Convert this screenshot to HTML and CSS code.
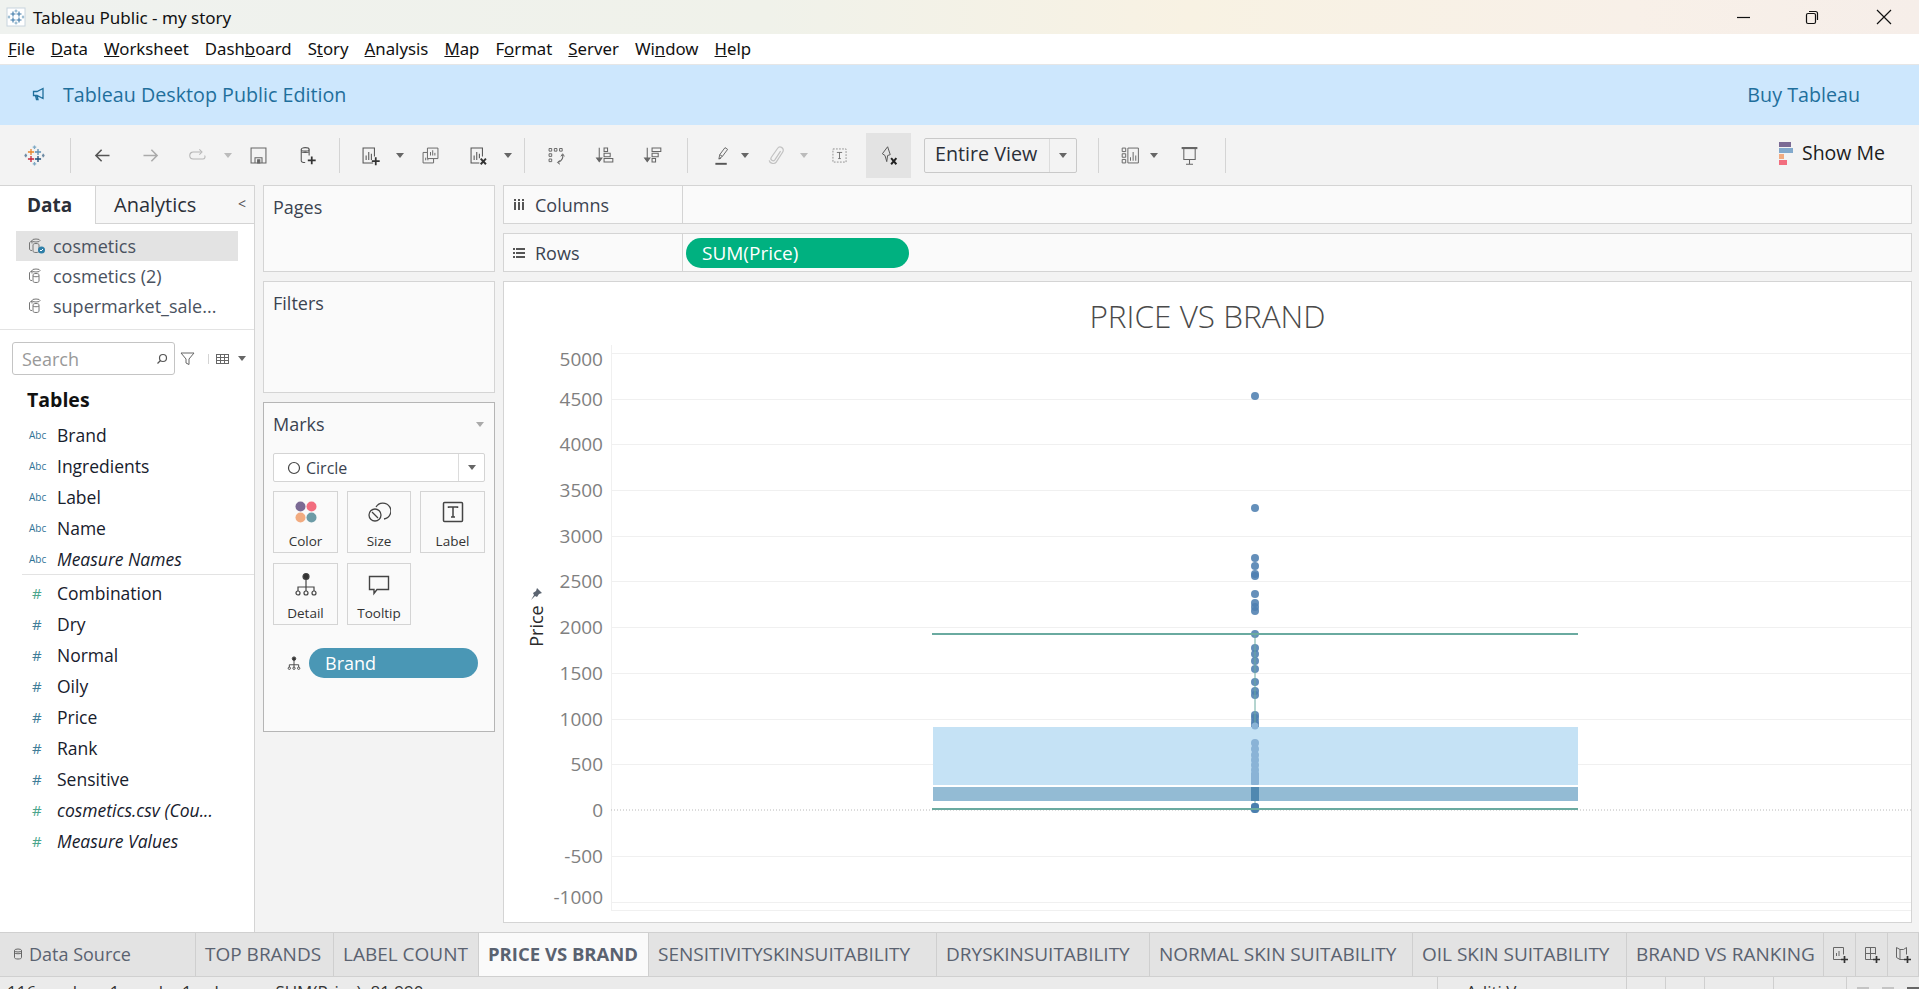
FILE: index.html
```html
<!DOCTYPE html>
<html lang="en">
  <head>
    <meta charset="utf-8">
    <title>Tableau Public - my story</title>
    <link rel="stylesheet" href="styles.css">
  </head>
  <body>
    <div class="titlebar">
      <svg class="app-icon" width="20" height="20" viewBox="0 0 20 20"><rect x="1" y="1" width="18" height="18" fill="#fff" stroke="#c8d4de"/><path d="M7 4.500v5M4.500 7h5M13 4.500v5M10.500 7h5M7 10.500v5M4.500 13h5M13 10.500v5M10.500 13h5" stroke="#3c78a8" stroke-width="1.100" fill="none"/><path d="M10 2.500v3M8.500 4h3M10 14.500v3M8.500 16h3M3 8.500v3M1.800 10h2.400M17 8.500v3M15.800 10h2.400" stroke="#7fa9c4" fill="none"/></svg>
      <span class="app-title">Tableau Public - my story</span>
      <div class="win-btns">
        <svg width="16" height="16" viewBox="0 0 16 16"><path d="M1 8.500h13" stroke="#111" stroke-width="1.200"/></svg>
        <svg width="16" height="16" viewBox="0 0 16 16"><rect x="2.500" y="4.500" width="9" height="10" rx="1.500" fill="none" stroke="#111" stroke-width="1.200"/><path d="M5 2.500h6.500a2 2 0 0 1 2 2V11" fill="none" stroke="#111" stroke-width="1.200"/></svg>
        <svg class="win-close" width="16" height="16" viewBox="0 0 16 16"><path d="M1 1l14 14M15 1L1 15" stroke="#111" stroke-width="1.200"/></svg>
      </div>
    </div>
    <div class="menubar">
      <span><u>F</u>ile</span><span><u>D</u>ata</span><span><u>W</u>orksheet</span><span>Dash<u>b</u>oard</span><span>S<u>t</u>ory</span><span><u>A</u>nalysis</span><span><u>M</u>ap</span><span>F<u>o</u>rmat</span><span><u>S</u>erver</span><span>Wi<u>n</u>dow</span><span><u>H</u>elp</span>
    </div>
    <div class="banner">
      <svg width="14" height="14" viewBox="0 0 14 14"><path d="M1.500 4.500h3.500l6-3v10l-6-3H1.500zM3.500 8.500l1 4h1.500l-1-4" fill="none" stroke="#1f6f9c" stroke-width="1.300"/></svg>
      <span class="banner-title">Tableau Desktop Public Edition</span>
      <span class="banner-buy">Buy Tableau</span>
    </div>

    <div class="toolbar">
      <div class="tool">
        <svg width="24" height="24" viewBox="0 0 24 24" fill="none" stroke-width="1.500"><path d="M8 4.500v7M4.500 8h7" stroke="#e8862c"/><path d="M16 4.500v7M12.500 8h7" stroke="#5d8fb3"/><path d="M8 12.500v7M4.500 16h7" stroke="#c5283d"/><path d="M16 12.500v7M12.500 16h7" stroke="#1f4e79"/><path d="M12 .5v4M10 2.500h4M12 19.500v4M10 21.500h4" stroke="#7fa9c4"/><path d="M2 10v4M.5 12h3M22 10v4M20.500 12h3" stroke="#6d8aa3"/></svg>
      </div>

      <div class="group group-history">
        <div class="tool"><svg width="24" height="24" viewBox="0 0 24 24" fill="none" stroke="#555" stroke-width="1.800"><path d="M20 12H5M11 5.500L4.500 12l6.500 6.500"/></svg></div>
        <div class="tool"><svg width="24" height="24" viewBox="0 0 24 24" fill="none" stroke="#aaa" stroke-width="1.800"><path d="M4 12h15M13 5.500l6.500 6.500-6.500 6.500"/></svg></div>
        <div class="tool"><svg width="24" height="24" viewBox="0 0 24 24" fill="none" stroke="#b5b5b5" stroke-width="1.200"><path d="M15 8H6a2.500 2.500 0 0 0 0 8h11a2.500 2.500 0 0 0 2-4"/><path d="M13 5l3 3-3 3"/></svg></div>
        <div class="caret caret-off"></div>
        <div class="tool"><svg width="24" height="24" viewBox="0 0 24 24" fill="none" stroke="#666" stroke-width="1.200"><path d="M3.500 3.500h17v17h-17z"/><path d="M8 20.500v-6h8v6"/><path d="M11 17h2.500v3.500H11z" fill="#666"/></svg></div>
        <div class="tool"><svg width="24" height="24" viewBox="0 0 24 24" fill="none" stroke="#555" stroke-width="1.200"><ellipse cx="10.500" cy="5" rx="4.500" ry="2"/><path d="M6 5v13c0 1 2 2 4.500 2M15 5v7M6 7.500c1 1.500 8 1.500 9 0"/><path d="M18 13v9M13.500 17.500h9" stroke="#333" stroke-width="2"/></svg></div>
      </div>

      <div class="group group-sheet">
        <div class="tool"><svg width="24" height="24" viewBox="0 0 24 24" fill="none" stroke="#555" stroke-width="1.200"><path d="M15 20.500H3.500v-17h13V13"/><path d="M7 17v-5M10 17V8M13 17v-7"/><path d="M18 14v9M13.500 18.500h9" stroke="#333" stroke-width="2"/></svg></div>
        <div class="caret"></div>
        <div class="tool"><svg width="24" height="24" viewBox="0 0 24 24" fill="none" stroke="#666" stroke-width="1.100"><path d="M8.500 3.500h12v12h-12z"/><path d="M12 12V8M14.500 12V6M17 12V9"/><path d="M8 8.500H3.500v12h12V16"/><path d="M6.500 17.500v-3M9 17.500v-2"/></svg></div>
        <div class="tool"><svg width="24" height="24" viewBox="0 0 24 24" fill="none" stroke="#555" stroke-width="1.200"><path d="M13 20.500H3.500v-17h13V13"/><path d="M7 17v-5M10 17V8M13 15v-5"/><path d="M14.500 15.500l6 6.500M20.500 15.500l-6 6.500" stroke="#333" stroke-width="2.200"/></svg></div>
        <div class="caret"></div>
      </div>

      <div class="group group-sort">
        <div class="tool"><svg width="24" height="24" viewBox="0 0 24 24" fill="none" stroke="#666" stroke-width="1.100"><path d="M3.500 4h3v3h-3zM9.500 4h3v3h-3zM15.500 4h3v3h-3zM3.500 10h3v3h-3zM3.500 16h3v3h-3z"/><path d="M19 11c1 4-1 7-5 9" stroke-width="1.300"/><path d="M16 22l-3-2 2.500-2.500M17 13l2-3 2 3"/></svg></div>
        <div class="tool"><svg width="24" height="24" viewBox="0 0 24 24" fill="none" stroke="#666" stroke-width="1.200"><path d="M6 3v15"/><path d="M3 15h6l-3 4z" fill="#666"/><path d="M11.500 3.500h4v4h-4zM11.500 9.500h7v4h-7zM11.500 15.500h10v4h-10z"/></svg></div>
        <div class="tool"><svg width="24" height="24" viewBox="0 0 24 24" fill="none" stroke="#666" stroke-width="1.200"><path d="M6 3v15"/><path d="M3 15h6l-3 4z" fill="#666"/><path d="M11.500 3.500h10v4h-10zM11.500 9.500h7v4h-7zM11.500 15.500h4v4h-4z"/></svg></div>
      </div>

      <div class="group group-mark">
        <div class="tool"><svg width="24" height="24" viewBox="0 0 24 24" fill="none" stroke="#666" stroke-width="1.100"><path d="M9 16l1-5 6-8 3 2-6 8zM10 11l3 2M9 16l2.500-1"/><path d="M5 21.500h13" stroke="#555" stroke-width="2.200"/></svg></div>
        <div class="caret caret-near"></div>
        <div class="tool tool-clip"><svg width="24" height="24" viewBox="0 0 24 24" fill="none" stroke="#c2c2c2" stroke-width="1.400"><path d="M15.500 7L9 17a2.500 2.500 0 0 1-4-3l7-10a3.500 3.500 0 0 1 6 4l-7.500 11.500c-2 3-7.500 1.500-8-2"/></svg></div>
        <div class="caret caret-off"></div>
        <div class="tool tool-text"><svg width="24" height="24" viewBox="0 0 24 24" fill="none" stroke="#888" stroke-width="1"><path d="M4.500 4.500h15v15h-15z" stroke-dasharray="2 1.500"/><path d="M9 8.500h6M12 8.500v7M10.500 15.500h3" stroke="#666"/></svg></div>
        <div class="tool tool-on"><svg width="24" height="24" viewBox="0 0 24 24" fill="none" stroke="#555" stroke-width="1.100"><path d="M11 2l3 9-3 1-1 7-2-7-3-2z"/><path d="M15 15l6 7M21 15l-6 7" stroke="#222" stroke-width="2.200"/></svg></div>
        <div class="fit-select"><span class="fit-label">Entire View</span><span class="fit-arrow"><i class="caret-shape"></i></span></div>
      </div>

      <div class="group group-fit">
        <div class="tool"><svg width="24" height="24" viewBox="0 0 24 24" fill="none" stroke="#666" stroke-width="1.100"><path d="M2.500 3.500h4v4h-4zM2.500 10h4v4h-4zM2.500 16.500h4v4h-4zM9 3.500h12v17H9z"/><path d="M12 18v-4M15 18V8M18 18v-6"/></svg></div>
        <div class="caret caret-near"></div>
        <div class="tool tool-present"><svg width="24" height="24" viewBox="0 0 24 24" fill="none" stroke="#666" stroke-width="1.200"><path d="M3 3.500h18" stroke-width="2.400"/><path d="M5.500 4v12.500h13V4M12 16.500V22M8 22h8"/></svg></div>
      </div>
      <div class="group-end"></div>

      <div class="show-me">
        <svg width="14" height="28" viewBox="0 0 14 28"><rect x="0" width="12" height="5" y="3" fill="#7b6a94"/><rect x="0" width="14" height="5" y="9" fill="#82a9cc"/><rect x="0" width="5" height="5" y="15" fill="#f2ab80"/><rect x="0" width="8" height="5" y="21" fill="#f26d7e"/></svg>
        <span>Show Me</span>
      </div>
    </div>

    <div class="main">
      <aside class="sidebar">
        <div class="side-tabs">
          <div class="side-tab side-tab-on">Data</div>
          <div class="side-tab">Analytics<span class="collapse">&lt;</span></div>
        </div>
        <div class="sources">
          <div class="source source-on">
            <svg width="18" height="18" viewBox="0 0 18 18" fill="none" stroke="#777"><ellipse cx="8" cy="3.500" rx="4" ry="1.500"/><path d="M4 3.500v3M1.500 6c0-1 1-1.500 2.500-1.500M1.500 6v6c0 1 1 1.500 2.500 1.500M5 8c0-1 1-1.500 3-1.500s3 .5 3 1.500v6c0 1-1 1.500-3 1.500S5 15 5 14z"/><circle cx="13.500" cy="13" r="3.500" fill="#2f7fa8" stroke="none"/><path d="M12 13l1 1 2-2" stroke="#fff"/></svg>
            <span>cosmetics</span>
          </div>
          <div class="source">
            <svg width="18" height="18" viewBox="0 0 18 18" fill="none" stroke="#777"><ellipse cx="8" cy="3.500" rx="4" ry="1.500"/><path d="M4 3.500v3M1.500 6c0-1 1-1.500 2.500-1.500M1.500 6v6c0 1 1 1.500 2.500 1.500M5 8c0-1 1-1.500 3-1.500s3 .5 3 1.500v6c0 1-1 1.500-3 1.500S5 15 5 14zM5 9c1 1 5 1 6 0"/></svg>
            <span>cosmetics (2)</span>
          </div>
          <div class="source">
            <svg width="18" height="18" viewBox="0 0 18 18" fill="none" stroke="#777"><ellipse cx="8" cy="3.500" rx="4" ry="1.500"/><path d="M4 3.500v3M1.500 6c0-1 1-1.500 2.500-1.500M1.500 6v6c0 1 1 1.500 2.500 1.500M5 8c0-1 1-1.500 3-1.500s3 .5 3 1.500v6c0 1-1 1.500-3 1.500S5 15 5 14zM5 9c1 1 5 1 6 0"/></svg>
            <span>supermarket_sale...</span>
          </div>
        </div>
        <div class="search-row">
          <div class="search">
            <span>Search</span>
            <svg width="12" height="12" viewBox="0 0 12 12" fill="none" stroke="#555" stroke-width="1.200"><circle cx="7" cy="5" r="3.500"/><path d="M4.500 7.500L1.500 10.500"/></svg>
          </div>
          <svg class="search-filter" width="15" height="15" viewBox="0 0 15 15" fill="none" stroke="#666"><path d="M1 2h13L9 8v5.500L6 12V8z"/></svg>
          <svg class="search-view" width="13" height="10" viewBox="0 0 13 10" fill="#666"><path d="M0 0h13v1H0zM0 3h13v1H0zM0 6h13v1H0zM0 9h13v1H0zM0 0h1v10H0zM4 0h1v10H4zM8 0h1v10H8zM12 0h1v10h-1z"/></svg>
          <i class="caret-shape"></i>
        </div>
        <h2 class="tables-head">Tables</h2>
        <ul class="fields">
          <li><i class="abc">Abc</i>Brand</li>
          <li><i class="abc">Abc</i>Ingredients</li>
          <li><i class="abc">Abc</i>Label</li>
          <li><i class="abc">Abc</i>Name</li>
          <li><i class="abc">Abc</i><em>Measure Names</em></li>
        </ul>
        <ul class="fields fields-num">
          <li><i class="num num-green">#</i>Combination</li>
          <li><i class="num">#</i>Dry</li>
          <li><i class="num">#</i>Normal</li>
          <li><i class="num">#</i>Oily</li>
          <li><i class="num">#</i>Price</li>
          <li><i class="num">#</i>Rank</li>
          <li><i class="num">#</i>Sensitive</li>
          <li><i class="num num-green">#</i><em>cosmetics.csv (Cou...</em></li>
          <li><i class="num num-green">#</i><em>Measure Values</em></li>
        </ul>
      </aside>

      <section class="cards">
        <div class="card card-pages">Pages</div>
        <div class="card card-filters">Filters</div>
        <div class="card card-marks">
          <div class="marks-head"><span>Marks</span><i class="caret-shape caret-light"></i></div>
          <div class="mark-type">
            <span class="mark-type-name"><svg width="14" height="14" viewBox="0 0 14 14" fill="none" stroke="#444" stroke-width="1.200"><circle cx="7" cy="7" r="5.500"/></svg>Circle</span>
            <span class="mark-type-arrow"><i class="caret-shape"></i></span>
          </div>
          <div class="mark-grid">
            <div class="mark-btn">
              <svg width="24" height="24" viewBox="0 0 24 24"><circle cx="6.500" cy="6.500" r="5" fill="#7b6a94"/><circle cx="17.500" cy="6.500" r="5" fill="#f26d7e"/><circle cx="6.500" cy="17.500" r="5" fill="#f2ab80"/><circle cx="17.500" cy="17.500" r="5" fill="#6c9ba6"/></svg>
              <span>Color</span>
            </div>
            <div class="mark-btn">
              <svg width="24" height="24" viewBox="0 0 24 24" fill="none" stroke="#444" stroke-width="1.300"><path d="M9 7a8 8 0 1 1 8 12"/><circle cx="8" cy="15" r="6"/><path d="M5 12l6 6"/></svg>
              <span>Size</span>
            </div>
            <div class="mark-btn">
              <svg width="24" height="24" viewBox="0 0 24 24" fill="none" stroke="#444" stroke-width="1.500"><rect x="2.500" y="2.500" width="19" height="19" rx="1"/><path d="M7.500 8V7h9v1M12 7v10M10 17h4"/></svg>
              <span>Label</span>
            </div>
            <div class="mark-btn">
              <svg width="24" height="24" viewBox="0 0 24 24" fill="none" stroke="#444" stroke-width="1.200"><circle cx="12" cy="4.500" r="3" fill="#333"/><path d="M12 7v8M4 19v-4h16v4M12 15v4"/><circle cx="4" cy="21" r="2"/><circle cx="12" cy="21" r="2"/><circle cx="20" cy="21" r="2"/></svg>
              <span>Detail</span>
            </div>
            <div class="mark-btn">
              <svg width="24" height="24" viewBox="0 0 24 24" fill="none" stroke="#444" stroke-width="1.400"><path d="M2.500 4.500h19v13H10l-3 4v-4H2.500z"/></svg>
              <span>Tooltip</span>
            </div>
          </div>
          <div class="mark-pill-row">
            <svg width="14" height="14" viewBox="0 0 24 24" fill="none" stroke="#444" stroke-width="1.600"><circle cx="12" cy="4.500" r="3" fill="#333"/><path d="M12 7v8M4 19v-4h16v4M12 15v4"/><circle cx="4" cy="21" r="2"/><circle cx="12" cy="21" r="2"/><circle cx="20" cy="21" r="2"/></svg>
            <div class="pill pill-blue">Brand</div>
          </div>
        </div>
      </section>

      <section class="work">
        <div class="shelf">
          <div class="shelf-label"><svg width="12" height="12" viewBox="0 0 12 12" fill="#555"><path d="M1 3h2v8H1zM5 3h2v8H5zM9 3h2v8H9zM1 0h2v2H1zM5 0h2v2H5zM9 0h2v2H9z"/></svg>Columns</div>
          <div class="shelf-body"></div>
        </div>
        <div class="shelf">
          <div class="shelf-label"><svg width="12" height="12" viewBox="0 0 12 12" fill="#555"><path d="M0 1h2v2H0zM0 5h2v2H0zM0 9h2v2H0zM3 1h9v2H3zM3 5h9v2H3zM3 9h9v2H3z"/></svg>Rows</div>
          <div class="shelf-body"><div class="pill pill-green">SUM(Price)</div></div>
        </div>
        <div class="canvas">
          <h1 class="viz-title">PRICE VS BRAND</h1>
          <svg class="viz" width="1407" height="600" viewBox="503 323 1407 600">
            <g class="grid">
              <path d="M610 346V911"/>
              <path d="M610 354H1910M610 400H1910M610 445H1910M610 491H1910M610 537H1910M610 582H1910M610 628H1910M610 674H1910M610 720H1910M610 765H1910M610 857H1910M610 903H1910M610 911H1910"/>
            </g>
            <path class="zero" d="M610 811H1910"/>
            <g class="ticks">
              <text x="602" y="367">5000</text>
              <text x="602" y="407">4500</text>
              <text x="602" y="452">4000</text>
              <text x="602" y="498">3500</text>
              <text x="602" y="544">3000</text>
              <text x="602" y="589">2500</text>
              <text x="602" y="635">2000</text>
              <text x="602" y="681">1500</text>
              <text x="602" y="727">1000</text>
              <text x="602" y="772">500</text>
              <text x="602" y="818">0</text>
              <text x="602" y="864">-500</text>
              <text x="602" y="905">-1000</text>
            </g>
            <g transform="translate(542 627) rotate(-90)">
              <text class="axis-title" text-anchor="middle">Price</text>
            </g>
            <path class="axis-pin" d="M536 589l5 5-3 1-2 3-2-1-4 4 3-5-1-2 3-2z"/>

            <g class="dots">
              <circle cx="1254" cy="397" r="4"/><circle cx="1254" cy="509" r="4"/><circle cx="1254" cy="559" r="4"/><circle cx="1254" cy="567" r="4"/><circle cx="1254" cy="575" r="4"/><circle cx="1254" cy="577" r="4"/><circle cx="1254" cy="595" r="4"/><circle cx="1254" cy="604" r="4"/><circle cx="1254" cy="608" r="4"/><circle cx="1254" cy="612" r="4"/>
              <circle cx="1254" cy="635" r="4"/><circle cx="1254" cy="649" r="4"/><circle cx="1254" cy="655" r="4"/><circle cx="1254" cy="662" r="4"/><circle cx="1254" cy="670" r="4"/><circle cx="1254" cy="683" r="4"/><circle cx="1254" cy="692" r="4"/><circle cx="1254" cy="696" r="4"/><circle cx="1254" cy="716" r="4"/><circle cx="1254" cy="719" r="4"/><circle cx="1254" cy="723" r="4"/><circle cx="1254" cy="726" r="4"/><circle cx="1254" cy="729" r="4"/>
            </g>
            <path class="whisker-stem" d="M1254 635V728M1254 802V810"/>
            <rect class="box-top" x="932" y="728" width="645" height="58"/>
            <rect class="box-bottom" x="932" y="788" width="645" height="14"/>
            <g class="dots dots-in-box">
              <circle cx="1254" cy="727" r="3.500"/>
              <circle cx="1254" cy="744" r="4"/><circle cx="1254" cy="750" r="4"/><circle cx="1254" cy="756" r="4"/><circle cx="1254" cy="761" r="4"/><circle cx="1254" cy="766" r="4"/><circle cx="1254" cy="771" r="4"/>
              <rect x="1250" y="773" width="8" height="13" rx="1"/>
            </g>
            <rect class="dots-solid" x="1250" y="788" width="8" height="14"/>
            <rect class="dots-dark" x="1250" y="804" width="8" height="10" rx="3"/>
            <path class="whisker" d="M931 635H1577M931 810H1577"/>
          </svg>
        </div>
      </section>
    </div>

    <div class="tabs">
      <div class="tab tab-source"><svg width="10" height="12" viewBox="0 0 10 12" fill="none" stroke="#666"><ellipse cx="5" cy="2.500" rx="3.500" ry="1.500"/><path d="M1.500 2.500v7c0 1 1.500 1.500 3.500 1.500s3.500-.5 3.500-1.500v-7M1.500 5c1 1 6 1 7 0"/></svg>Data Source</div>
      <div class="tab">TOP BRANDS</div>
      <div class="tab">LABEL COUNT</div>
      <div class="tab tab-on">PRICE VS BRAND</div>
      <div class="tab">SENSITIVITYSKINSUITABILITY</div>
      <div class="tab">DRYSKINSUITABILITY</div>
      <div class="tab">NORMAL SKIN SUITABILITY</div>
      <div class="tab">OIL SKIN SUITABILITY</div>
      <div class="tab">BRAND VS RANKING</div>
      <div class="tab tab-icon"><svg width="20" height="20" viewBox="0 0 20 20" fill="none" stroke="#666"><path d="M11 14.500H3.500v-12h10v7M6.500 11V8M9 11V6"/><path d="M14.500 11v7M11 14.500h7" stroke="#333" stroke-width="1.700"/></svg></div>
      <div class="tab tab-icon"><svg width="20" height="20" viewBox="0 0 20 20" fill="none" stroke="#666"><path d="M11 14.500H3.500v-12h10v7M3.500 8.500h10M8.500 2.500v12"/><path d="M14.500 11v7M11 14.500h7" stroke="#333" stroke-width="1.700"/></svg></div>
      <div class="tab tab-icon"><svg width="20" height="20" viewBox="0 0 20 20" fill="none" stroke="#666"><path d="M11 14.500H7l-3.500-2v-10l3.500 2h3.500l3-2v7M7 4.500v10"/><path d="M14.500 11v7M11 14.500h7" stroke="#333" stroke-width="1.700"/></svg></div>
    </div>
    <div class="statusbar">
      <div class="status-text"><span>116 marks</span><span>1 row by 1 column</span><span>SUM(Price): 81,990</span></div>
      <div class="status-cells">
        <div class="status-cell status-user">Aditi Verma</div>
        <div class="status-cell"></div>
        <div class="status-cell"></div>
        <div class="status-cell status-m"></div>
        <div class="status-cell status-l"></div>
        <div class="status-views"><i></i><i></i><i></i></div>
      </div>
    </div>
  </body>
</html>
```

FILE: styles.css
```css
html {
  height: 989px;
  margin: 0;
  padding: 0;
  overflow: hidden;
}
body {
  display: flex;
  flex-direction: column;
  height: 989px;
  margin: 0;
  overflow: hidden;
  background-color: #f3f3f3;
  font: 18px "Open Sans", sans-serif;
  color: #2b2f38;
}
ul {
  margin: 0;
  padding: 0;
  list-style: none;
}
i {
  font-style: normal;
}
em {
  font-style: italic;
}

/* window chrome */
.titlebar {
  display: flex;
  align-items: center;
  flex: none;
  height: 34px;
  padding-left: 6px;
  background: linear-gradient(90deg, #eff2ef 0%, #f0f2ea 40%, #f8f2e3 62%, #f8f0e8 85%, #f6eee9 100%);
}
.app-title {
  margin-left: 7px;
  font: 17px "Noto Sans", sans-serif;
  color: #111;
}
.win-btns {
  display: flex;
  gap: 52px;
  margin-left: auto;
  margin-right: 27px;
}
.win-close {
  margin-left: 4px;
}
.menubar {
  display: flex;
  align-items: center;
  flex: none;
  gap: 16px;
  height: 30px;
  box-sizing: content-box;
  padding-left: 8px;
  background-color: #fff;
  border-bottom: 1px solid #e6e6e6;
  font: 16.800px/34px "Noto Sans", sans-serif;
  color: #111;
}
.banner {
  display: flex;
  align-items: center;
  flex: none;
  height: 58px;
  padding: 0 59px 2px 32px;
  background-color: #cde7fd;
  color: #1f6f9c;
  font-size: 19.700px;
}
.banner-title {
  margin-left: 17px;
}
.banner-buy {
  margin-left: auto;
}

/* toolbar */
.toolbar {
  display: flex;
  align-items: center;
  flex: none;
  height: 60px;
  padding-left: 10px;
}
.tool {
  display: flex;
  align-items: center;
  justify-content: center;
  flex: none;
  width: 48px;
  height: 45px;
}
.tool svg {
  width: 21px;
  height: 21px;
}
.tool-on {
  width: 45px;
  margin-left: 3px;
  background-color: #e3e3e3;
}
.tool-present {
  margin-left: 6px;
}
.tool-clip {
  margin: 0 -3px 0 3px;
}
.tool-text {
  margin-left: 5px;
}
.group {
  display: flex;
  align-items: center;
  height: 35px;
  border-left: 1px solid #d4d4d4;
}
.group-history {
  margin-left: 12px;
  padding-left: 7px;
}
.group-sheet {
  margin-left: 9px;
  padding-left: 6px;
}
.group-sort {
  margin-left: 10px;
  padding-left: 7px;
}
.group-mark {
  margin-left: 11px;
  padding-left: 9px;
}
.group-fit {
  margin-left: 21px;
  padding-left: 7px;
}
.group-end {
  width: 1px;
  height: 35px;
  margin-left: 12px;
  background-color: #d4d4d4;
}
.caret {
  display: flex;
  align-items: center;
  justify-content: center;
  flex: none;
  width: 12px;
}
.caret::after, .caret-shape {
  content: "";
  display: inline-block;
  width: 0;
  height: 0;
  border-left: 4px solid transparent;
  border-right: 4px solid transparent;
  border-top: 5px solid #666;
}
.caret-off::after {
  border-top-color: #bbb;
}
.caret-near {
  width: 10px;
  margin-left: -5px;
}
.caret-light {
  border-top-color: #aaa;
}
.fit-select {
  display: flex;
  width: 153px;
  height: 35px;
  margin-left: 13px;
  box-sizing: border-box;
  border: 1px solid #c9c9c9;
  border-radius: 2px;
  font-size: 19.700px;
}
.fit-label {
  flex: 1;
  padding-left: 10px;
  line-height: 30px;
}
.fit-arrow {
  display: flex;
  align-items: center;
  justify-content: center;
  width: 26px;
  border-left: 1px solid #dcdcdc;
}
.show-me {
  display: flex;
  align-items: center;
  gap: 9px;
  margin-left: auto;
  margin-right: 34px;
  padding-bottom: 5px;
  font-size: 19.500px;
  color: #1c1c1c;
}

/* main area */
.main {
  display: flex;
  flex: 1;
  min-height: 0;
}
.sidebar {
  flex: none;
  width: 254px;
  background-color: #fff;
  border-right: 1px solid #d4d4d4;
}
.side-tabs {
  display: flex;
  height: 39px;
  font-size: 20px;
  background-color: #f7f7f7;
}
.side-tab {
  position: relative;
  display: flex;
  align-items: center;
  flex: 1;
  padding-left: 18px;
  border-top: 1px solid #d4d4d4;
  border-left: 1px solid #d4d4d4;
  border-bottom: 1px solid #d4d4d4;
}
.side-tab-on {
  flex: none;
  width: 95px;
  box-sizing: border-box;
  padding-left: 27px;
  border-left: 0;
  border-bottom: 0;
  background-color: #fff;
  font-size: 19px;
  font-weight: 700;
}
.collapse {
  position: absolute;
  right: 8px;
  top: 8px;
  font-size: 14px;
  color: #555;
}
.sources {
  padding: 7px 16px 8px;
  border-bottom: 1px solid #e3e3e3;
  color: #4a5260;
}
.source {
  display: flex;
  align-items: center;
  gap: 7px;
  height: 30px;
  padding-left: 12px;
  white-space: nowrap;
}
.source-on {
  background-color: #e3e3e3;
}
.search-row {
  display: flex;
  align-items: center;
  height: 33px;
  margin-top: 12px;
  padding-left: 12px;
}
.search {
  display: flex;
  align-items: center;
  justify-content: space-between;
  width: 163px;
  height: 33px;
  box-sizing: border-box;
  padding: 0 6px 0 9px;
  border: 1px solid #c4c4c4;
  border-radius: 3px;
  color: #999;
}
.search-filter {
  margin-left: 5px;
}
.search-view {
  margin-left: 13px;
  padding-left: 7px;
  border-left: 1px solid #d4d4d4;
}
.search-row .caret-shape {
  margin-left: 9px;
}
.tables-head {
  height: 27px;
  margin: 11px 0 6px 27px;
  font-size: 19.500px;
  font-weight: 700;
  color: #111;
}
.fields li {
  display: flex;
  align-items: center;
  height: 31px;
  color: #17202c;
  font-size: 17.500px;
  white-space: nowrap;
}
.fields-num {
  margin: 0 0 0 22px;
  padding-top: 2px;
  border-top: 1px solid #e3e3e3;
}
.fields-num li {
  margin-left: -22px;
}
.abc {
  width: 28px;
  margin-left: 29px;
  font-size: 10px;
  color: #2f7396;
}
.num {
  width: 25px;
  margin-left: 32px;
  font-size: 15px;
  color: #3f7d98;
}
.num-green {
  color: #4aa58c;
}

/* pages, filters, marks */
.cards {
  display: flex;
  flex-direction: column;
  flex: none;
  gap: 9px;
  width: 232px;
  margin-left: 8px;
}
.card {
  box-sizing: border-box;
  padding: 9px 9px;
  background-color: #fafafa;
  border: 1px solid #d4d4d4;
  color: #3b4350;
}
.card-pages {
  height: 87px;
}
.card-filters {
  height: 112px;
}
.card-marks {
  height: 330px;
  border-color: #b5b5b5;
}
.marks-head {
  display: flex;
  align-items: center;
  justify-content: space-between;
  height: 24px;
  padding-right: 1px;
}
.mark-type {
  display: flex;
  align-items: center;
  height: 29px;
  box-sizing: border-box;
  margin-top: 17px;
  border: 1px solid #d4d4d4;
  border-radius: 2px;
  background-color: #fff;
  font-size: 16px;
}
.mark-type-name {
  display: flex;
  align-items: center;
  gap: 5px;
  flex: 1;
  padding-left: 13px;
}
.mark-type-arrow {
  display: flex;
  align-items: center;
  justify-content: center;
  width: 25px;
  height: 100%;
  border-left: 1px solid #dcdcdc;
}
.mark-grid {
  display: grid;
  grid-template-columns: 65px 64px 65px;
  grid-auto-rows: 62px;
  gap: 10px 9px;
  margin-top: 9px;
}
.mark-btn {
  display: flex;
  flex-direction: column;
  align-items: center;
  gap: 9px;
  padding-top: 8px;
  box-sizing: border-box;
  border: 1px solid #d4d4d4;
  font-size: 13.500px;
  line-height: 16px;
  color: #333;
}
.mark-pill-row {
  display: flex;
  align-items: center;
  gap: 8px;
  margin-top: 23px;
  padding-left: 14px;
}
.pill {
  border-radius: 15px;
  color: #fff;
}
.pill-blue {
  width: 169px;
  height: 30px;
  padding-left: 16px;
  box-sizing: border-box;
  background-color: #4a97b5;
  line-height: 30px;
}
.pill-green {
  width: 223px;
  height: 30px;
  padding-left: 16px;
  box-sizing: border-box;
  margin-left: 3px;
  background-color: #00b180;
  font-size: 19px;
  line-height: 30px;
}

/* shelves and view */
.work {
  display: flex;
  flex-direction: column;
  flex: 1;
  gap: 9px;
  min-width: 0;
  margin: 0 7px 9px 8px;
}
.shelf {
  display: flex;
  flex: none;
  height: 39px;
  box-sizing: border-box;
  background-color: #fafafa;
  border: 1px solid #d4d4d4;
}
.shelf-label {
  display: flex;
  align-items: center;
  gap: 10px;
  width: 179px;
  padding-left: 9px;
  box-sizing: border-box;
  border-right: 1px solid #d4d4d4;
  color: #3b4350;
}
.shelf-body {
  display: flex;
  align-items: center;
  flex: 1;
}
.canvas {
  flex: 1;
  min-height: 0;
  overflow: hidden;
  box-sizing: border-box;
  background-color: #fff;
  border: 1px solid #d4d4d4;
}
.viz-title {
  height: 40px;
  margin: 0;
  font: 300 31.500px/68px "Open Sans", sans-serif;
  text-align: center;
  color: #4a4a4a;
}
.viz {
  display: block;
}
.grid path {
  fill: none;
  stroke: #f0f0f0;
  stroke-width: 1;
  shape-rendering: crispEdges;
}
.zero {
  stroke: #b8b8b8;
  stroke-dasharray: 1 2;
}
.ticks text {
  font: 19px "Open Sans", sans-serif;
  fill: #808080;
  text-anchor: end;
}
.axis-title {
  font: 18px "Open Sans", sans-serif;
  fill: #2b2b2b;
}
.axis-pin {
  fill: #5b6470;
}
.dots circle {
  fill: #4e7fb0;
  fill-opacity: .88;
}
.dots-in-box circle, .dots-in-box rect {
  fill: #8ab3d6;
  fill-opacity: 1;
}
.dots-solid {
  fill: #5088b0;
}
.dots-dark {
  fill: #4a7fae;
}
.whisker-stem {
  stroke: #6aaaa0;
  stroke-width: 1;
  fill: none;
}
.whisker {
  stroke: #6aaaa0;
  stroke-width: 2;
  fill: none;
}
.box-top {
  fill: #c5e2f5;
}
.box-bottom {
  fill: #93bbd4;
}

/* sheet tabs */
.tabs {
  display: grid;
  grid-template-columns: 196px 138px 145px 170px 288px 213px 263px 214px 197px 32px 32px 31px;
  flex: none;
  height: 45px;
  box-sizing: border-box;
  background-color: #e3e3e3;
  border-top: 1px solid #d0d0d0;
  border-bottom: 1px solid #d0d0d0;
  font-size: 19px;
}
.tab {
  display: flex;
  align-items: center;
  padding: 0 0 2px 9px;
  border-right: 1px solid #cfcfcf;
  white-space: nowrap;
  color: #5a6270;
}
.tab-source {
  gap: 6px;
  padding-left: 13px;
  font-size: 18px;
}
.tab-on {
  background-color: #fafafa;
  font-size: 18.500px;
  font-weight: 700;
}
.tab-icon {
  justify-content: center;
  padding: 0;
}
.statusbar {
  display: flex;
  flex: none;
  height: 12px;
  overflow: hidden;
  background-color: #ebebeb;
  font-size: 17px;
  color: #333;
}
.status-text {
  display: flex;
  gap: 20px;
  padding: 3px 0 0 7px;
  white-space: nowrap;
}
.status-cells {
  display: flex;
  margin-left: auto;
}
.status-cell {
  width: 39px;
  box-sizing: border-box;
  border-left: 1px solid #cfcfcf;
}
.status-m {
  width: 69px;
}
.status-l {
  width: 73px;
}
.status-user {
  width: 189px;
  padding: 3px 0 0 28px;
  white-space: nowrap;
}
.status-views {
  display: flex;
  gap: 13px;
  width: 73px;
  padding: 10px 0 0 10px;
  box-sizing: border-box;
  border-left: 1px solid #cfcfcf;
}
.status-views i {
  width: 12px;
  height: 2px;
  background-color: #c4c4c4;
}
.status-views i:last-child {
  background-color: #666;
}
```
